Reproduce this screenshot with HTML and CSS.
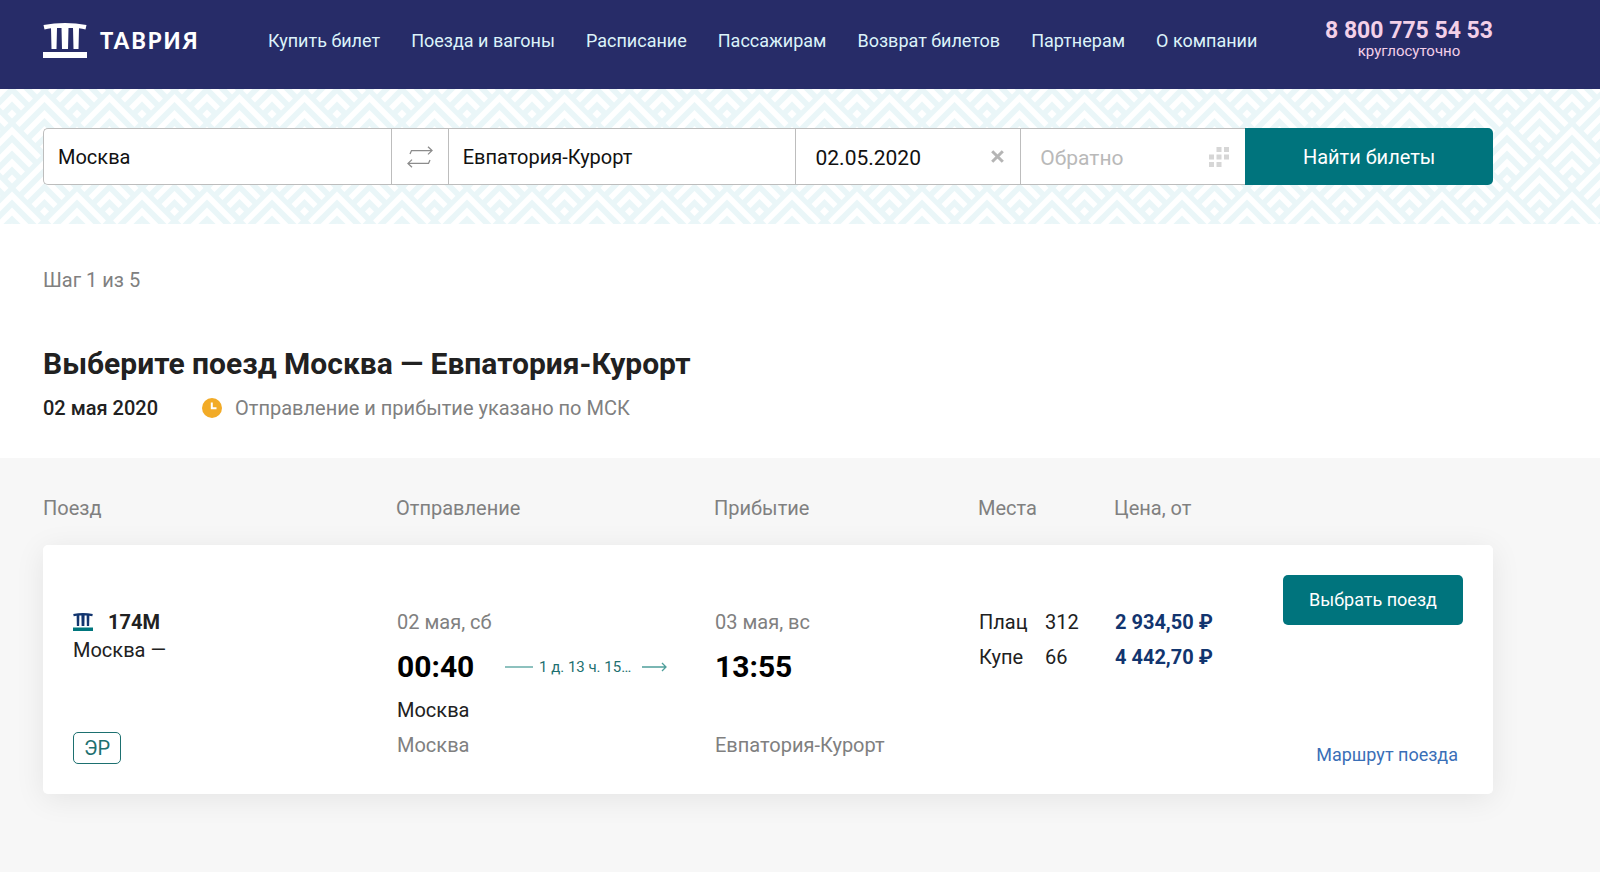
FILE: index.html
```html
<!DOCTYPE html>
<html lang="ru">
<head>
<meta charset="utf-8">
<meta name="viewport" content="width=device-width, initial-scale=1">
<title>Таврия — выбор поезда</title>
<link rel="stylesheet" href="styles.css">
</head>
<body>
<header class="header wrap">
  <a class="logo" href="#">
    <svg class="logo-mark" width="44" height="36" viewBox="0 0 44 36" aria-hidden="true">
      <path fill="#fff" d="M.500 2Q22-2 43.500 2L42.500 6.500Q39 5.500 36 5.300L35.500 26H30.500L30 5H25.500L25 26H19L18.500 5H14L13.500 26H8.500L8 5.300Q5 5.500 1.500 6.500ZM0 29H44V35H0Z"/>
    </svg>
    <span class="logo-text">ТАВРИЯ</span>
  </a>
  <nav class="nav">
    <a href="#">Купить билет</a>
    <a href="#">Поезда и вагоны</a>
    <a href="#">Расписание</a>
    <a href="#">Пассажирам</a>
    <a href="#">Возврат билетов</a>
    <a href="#">Партнерам</a>
    <a href="#">О компании</a>
  </nav>
  <a class="phone" href="tel:88007755453">
    <strong>8 800 775 54 53</strong>
    <span>круглосуточно</span>
  </a>
</header>

<section class="search wrap">
  <form class="search-form">
    <input class="field city" type="text" value="Москва" aria-label="Откуда">
    <button class="swap" type="button" aria-label="Поменять местами">
      <svg width="26" height="22" viewBox="0 0 26 22" fill="none" stroke="#8c8c8c" stroke-width="1.300" aria-hidden="true">
        <path d="M3 8L4.500 4.600H25M21 .800L25 4.600L21 8.400M23 14L21.500 17.400H1M5 13.600L1 17.400L5 21.200"/>
      </svg>
    </button>
    <input class="field city" type="text" value="Евпатория-Курорт" aria-label="Куда">
    <div class="date-box">
      <input class="field" type="text" value="02.05.2020" aria-label="Туда">
      <button class="icon-btn" type="button" aria-label="Очистить дату">
        <svg width="13" height="13" viewBox="0 0 13 13" stroke="#b5b5b5" stroke-width="3" aria-hidden="true"><path d="M1.200 1.200L11.800 11.800M11.800 1.200L1.200 11.800"/></svg>
      </button>
    </div>
    <div class="date-box">
      <input class="field" type="text" placeholder="Обратно" aria-label="Обратно">
      <button class="icon-btn" type="button" aria-label="Открыть календарь">
        <svg width="20" height="20" viewBox="0 0 20 20" fill="#d6d6d6" aria-hidden="true"><path d="M7.500 0h5v5h-5zM15 0h5v5h-5zM0 7.500h5v5H0zM7.500 7.500h5v5h-5zM15 7.500h5v5h-5zM0 15h5v5H0zM7.500 15h5v5h-5z"/></svg>
      </button>
    </div>
    <button class="submit" type="submit">Найти билеты</button>
  </form>
</section>

<main>
  <section class="intro wrap">
    <p class="step">Шаг 1 из 5</p>
    <h1>Выберите поезд Москва — Евпатория-Курорт</h1>
    <div class="meta">
      <span class="trip-date">02 мая 2020</span>
      <span class="note">
        <svg width="20" height="20" viewBox="0 0 20 20" aria-hidden="true"><circle cx="10" cy="10" r="10" fill="#f2ab27"/><path d="M9.800 4.500V10.200H14.500" fill="none" stroke="#fff" stroke-width="2"/></svg>
        Отправление и прибытие указано по МСК
      </span>
    </div>
  </section>

  <section class="results wrap">
    <table class="trains">
      <colgroup>
        <col class="col-train"><col class="col-dep"><col class="col-arr"><col class="col-seats"><col class="col-price"><col>
      </colgroup>
      <thead>
        <tr><th>Поезд</th><th>Отправление</th><th>Прибытие</th><th>Места</th><th>Цена, от</th><th></th></tr>
      </thead>
      <tbody>
        <tr class="card">
          <td class="train">
            <div class="number">
              <svg width="20" height="18" viewBox="0 0 44 36" preserveAspectRatio="none" aria-hidden="true">
                <path fill="#12356f" d="M.500 2Q22-2 43.500 2L42.500 6.500Q39 5.500 36 5.300L35.500 26H30.500L30 5H25.500L25 26H19L18.500 5H14L13.500 26H8.500L8 5.300Q5 5.500 1.500 6.500Z"/>
                <path fill="#00767d" d="M0 29H44V36H0Z"/>
              </svg>
              <strong>174М</strong>
            </div>
            <div class="train-route">Москва —</div>
            <span class="badge">ЭР</span>
          </td>
          <td>
            <div class="line muted">02 мая, сб</div>
            <div class="time-row">
              <span class="time">00:40</span>
              <span class="duration">
                <svg width="28" height="10" viewBox="0 0 28 10" fill="none" stroke="#4f9f9b" stroke-width="1.300" aria-hidden="true"><path d="M0 5H28"/></svg>
                <span>1 д. 13 ч. 15…</span>
                <svg class="arrow" width="25" height="10" viewBox="0 0 25 10" fill="none" stroke="#4f9f9b" stroke-width="1.300" aria-hidden="true"><path d="M0 5H24M20 1L24 5L20 9"/></svg>
              </span>
            </div>
            <div class="line">Москва</div>
            <div class="line muted">Москва</div>
          </td>
          <td>
            <div class="line muted">03 мая, вс</div>
            <div class="time-row"><span class="time">13:55</span></div>
            <div class="line">&nbsp;</div>
            <div class="line muted">Евпатория-Курорт</div>
          </td>
          <td>
            <div class="line seat"><span>Плац</span><span>312</span></div>
            <div class="line seat"><span>Купе</span><span>66</span></div>
          </td>
          <td class="price">
            <div class="line">2 934,50 ₽</div>
            <div class="line">4 442,70 ₽</div>
          </td>
          <td class="actions">
            <button class="choose" type="button">Выбрать поезд</button>
            <a class="route-link" href="#">Маршрут поезда</a>
          </td>
        </tr>
      </tbody>
    </table>
  </section>
</main>
</body>
</html>
```
FILE: styles.css
```css
* {
  box-sizing: border-box;
}

body {
  margin: 0;
  min-height: 100vh;
  display: flex;
  flex-direction: column;
  background: #fff;
  color: #212121;
  font-family: Roboto, "Liberation Sans", sans-serif;
  font-size: 20px;
  line-height: 28px;
}

a {
  text-decoration: none;
}

button,
input {
  font: inherit;
}

button {
  border: 0;
  padding: 0;
  cursor: pointer;
}

.wrap {
  padding-left: 43px;
  padding-right: 107px;
}

/* Header */
.header {
  display: flex;
  align-items: center;
  height: 89px;
  padding-bottom: 8px;
  background: #272c68;
}

.logo {
  display: flex;
  align-items: center;
  gap: 13px;
  width: 225px;
  color: #fff;
}

.logo-text {
  font-family: Lato, sans-serif;
  font-weight: 900;
  font-size: 22px;
  letter-spacing: 2px;
}

.nav {
  display: flex;
  gap: 31px;
  white-space: nowrap;
}

.nav a {
  color: #dcf3fa;
  font-size: 18px;
}

.phone {
  display: flex;
  flex-direction: column;
  align-items: center;
  margin-left: auto;
  padding-bottom: 4px;
  color: #f3d0e8;
  font-size: 15px;
  line-height: 16px;
  white-space: nowrap;
}

.phone strong {
  font-size: 23px;
  font-weight: 700;
  line-height: 24px;
}

/* Search */
.search {
  padding-top: 39px;
  padding-bottom: 39px;
  background-color: #eaf6f8;
  background-image: url("data:image/svg+xml,%3Csvg xmlns='http://www.w3.org/2000/svg' xmlns:xlink='http://www.w3.org/1999/xlink' width='65' height='65'%3E%3Cdefs%3E%3Cg id='c' fill='none' stroke='%23fff' stroke-width='5.500'%3E%3Cpath d='M-27 34L0 7L27 34M-19 42L0 23L19 42M-11 50L0 39L11 50'/%3E%3Cpath d='M0 51L4.500 55.500L0 60L-4.500 55.500Z' fill='%23fff' stroke='none'/%3E%3C/g%3E%3C/defs%3E%3Cuse xlink:href='%23c' x='32.500'/%3E%3Cuse xlink:href='%23c' y='32.500'/%3E%3Cuse xlink:href='%23c' x='65' y='32.500'/%3E%3Cuse xlink:href='%23c' y='-32.500'/%3E%3Cuse xlink:href='%23c' x='65' y='-32.500'/%3E%3C/svg%3E");
  background-position: 12px 2px;
}

.search-form {
  display: flex;
  height: 57px;
}

.field {
  min-width: 0;
  border: 0;
  outline: 0;
  background: transparent;
  color: #111;
}

.city,
.swap,
.date-box {
  background: #fff;
  border: 1px solid #bdbdbd;
  border-right-width: 0;
}

.city {
  flex: 1 1 348px;
  padding: 0 14px;
}

.city:first-child {
  border-radius: 5px 0 0 5px;
}

.swap {
  display: grid;
  place-items: center;
  width: 57px;
}

.date-box {
  flex: 1 1 225px;
  display: flex;
  align-items: center;
  min-width: 0;
  padding: 0 16px 0 19px;
}

.date-box .field {
  flex: 1;
  padding: 3px 0 0;
  font-size: 21px;
}

.field::placeholder {
  color: #b9b9b9;
  opacity: 1;
}

.icon-btn {
  display: grid;
  place-items: center;
  background: none;
}

.submit {
  width: 248px;
  border-radius: 0 5px 5px 0;
  background: #00747d;
  color: #fff;
}

/* Intro */
.intro {
  padding-top: 42px;
  padding-bottom: 36px;
}

.step {
  margin: 0;
  color: #808080;
}

h1 {
  margin: 50px 0 10px;
  font-size: 30px;
  font-weight: 700;
  line-height: 40px;
}

.meta {
  display: flex;
  gap: 44px;
}

.trip-date {
  font-weight: 500;
}

.note {
  display: flex;
  align-items: center;
  gap: 13px;
  color: #808080;
}

/* Results */
main {
  flex: 1;
  display: flex;
  flex-direction: column;
}

.results {
  flex: 1;
  padding-top: 36px;
  padding-bottom: 78px;
  background: #f7f7f7;
}

.trains {
  width: 100%;
  table-layout: fixed;
  border-spacing: 0;
}

.col-train { width: 353px; }
.col-dep { width: 318px; }
.col-arr { width: 264px; }
.col-seats { width: 136px; }
.col-price { width: 169px; }

th {
  padding: 0 0 23px;
  color: #808080;
  font-weight: 400;
  text-align: left;
}

td {
  padding: 60px 0 31px 1px;
  background: #fff;
  vertical-align: top;
  white-space: nowrap;
}

td:first-child {
  border-radius: 5px 0 0 5px;
}

td:last-child {
  border-radius: 0 5px 5px 0;
}

.card {
  border-radius: 5px;
  box-shadow: 0 5px 30px rgba(0, 0, 0, 0.08);
}

.line {
  line-height: 35px;
}

.muted {
  color: #808080;
}

.train {
  padding: 63px 0 30px 30px;
}

.number {
  display: flex;
  align-items: center;
  gap: 15px;
}

.number strong {
  font-weight: 700;
}

.badge {
  display: inline-block;
  margin-top: 68px;
  padding: 0 10px;
  border: 1px solid #1d7070;
  border-radius: 5px;
  color: #1d7070;
  line-height: 30px;
}

.time-row {
  display: flex;
  align-items: center;
  height: 53px;
}

.time {
  width: 108px;
  color: #000;
  font-size: 30px;
  font-weight: 700;
}

.duration {
  display: flex;
  align-items: center;
  gap: 6px;
  color: #1d7070;
  font-size: 15px;
}

.arrow {
  margin-left: 5px;
}

.seat {
  display: grid;
  grid-template-columns: 66px 1fr;
}

.price {
  color: #12356f;
  font-weight: 700;
}

.actions {
  padding: 30px 30px 27px 0;
  text-align: right;
}

.choose {
  display: block;
  width: 180px;
  height: 50px;
  margin: 0 0 118px auto;
  border-radius: 5px;
  background: #00747d;
  color: #fff;
  font-size: 18px;
}

.route-link {
  display: block;
  padding-right: 5px;
  color: #3a6fb7;
  font-size: 18px;
  line-height: 24px;
}
```
